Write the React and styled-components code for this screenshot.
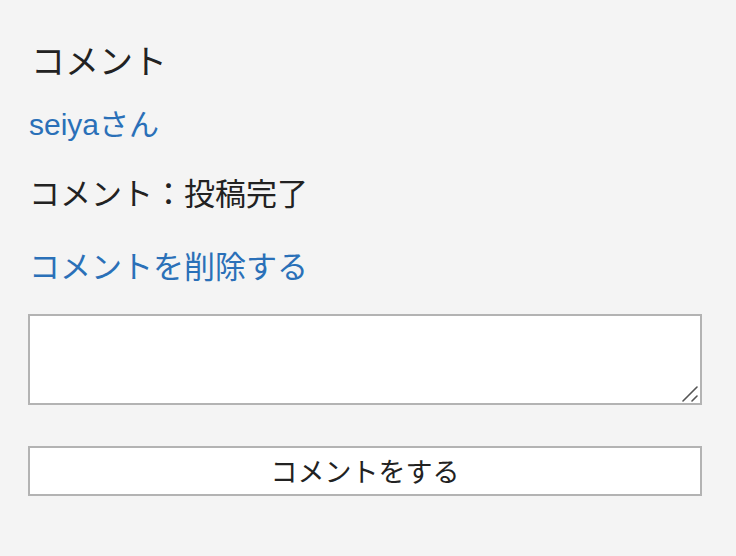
import React from 'react'
import styled, { createGlobalStyle } from 'styled-components'

const GlobalStyle = createGlobalStyle`
	html, body {
		margin: 0;
		padding: 0;
		background: #f4f4f4;
	}
	body {
		font-family: "Liberation Sans", "Noto Sans CJK JP", sans-serif;
		color: #222;
	}
`

const Page = styled.div`
	display: flex;
	flex-direction: column;
	align-items: flex-start;
	padding: 42px 34px 0 28px;
	width: 674px;
`

const Heading = styled.h2`
	margin: 0;
	padding-left: 3px;
	font-size: 34px;
	font-weight: 400;
	line-height: 40px;
`

const Line = styled.p`
	margin: ${p => p.$top}px 0 0 0;
	font-size: ${p => p.$size || 31}px;
	line-height: 40px;
	color: ${p => (p.$link ? '#2a70b8' : '#222')};
	padding-left: 1px;
`

const BoxWrap = styled.div`
	position: relative;
	margin-top: 26px;
	width: 674px;
	height: 91px;
`

const TextBox = styled.textarea`
	display: block;
	box-sizing: border-box;
	margin: 0;
	width: 100%;
	height: 100%;
	background: #fff;
	border: 2px solid #b3b3b3;
	border-radius: 0;
	font: inherit;
	font-size: 20px;
	resize: none;
	outline: none;
`

const Grip = styled.svg`
	position: absolute;
	right: 4px;
	bottom: 3px;
	pointer-events: none;
`

const SubmitButton = styled.button`
	box-sizing: border-box;
	margin: 41px 0 0 0;
	width: 674px;
	height: 50px;
	background: #fff;
	border: 2px solid #b3b3b3;
	border-radius: 0;
	font-family: "Noto Sans CJK JP", sans-serif;
	font-size: 27px;
	color: #222;
	padding: 0;
	line-height: 46px;
`

const App = () => (
	<>
		<GlobalStyle />
		<Page>
			<Heading>コメント</Heading>
			<Line $top={23} $size={30} $link>seiyaさん</Line>
			<Line $top={30}>コメント：投稿完了</Line>
			<Line $top={33} $link>コメントを削除する</Line>
			<BoxWrap>
				<TextBox />
				<Grip width="16" height="16" viewBox="0 0 16 16">
					<path d="M1 15 L15 1 M10 15 L15 10" stroke="#555" strokeWidth="1.6" strokeLinecap="round" fill="none" />
				</Grip>
			</BoxWrap>
			<SubmitButton>コメントをする</SubmitButton>
		</Page>
	</>
)

export default App
